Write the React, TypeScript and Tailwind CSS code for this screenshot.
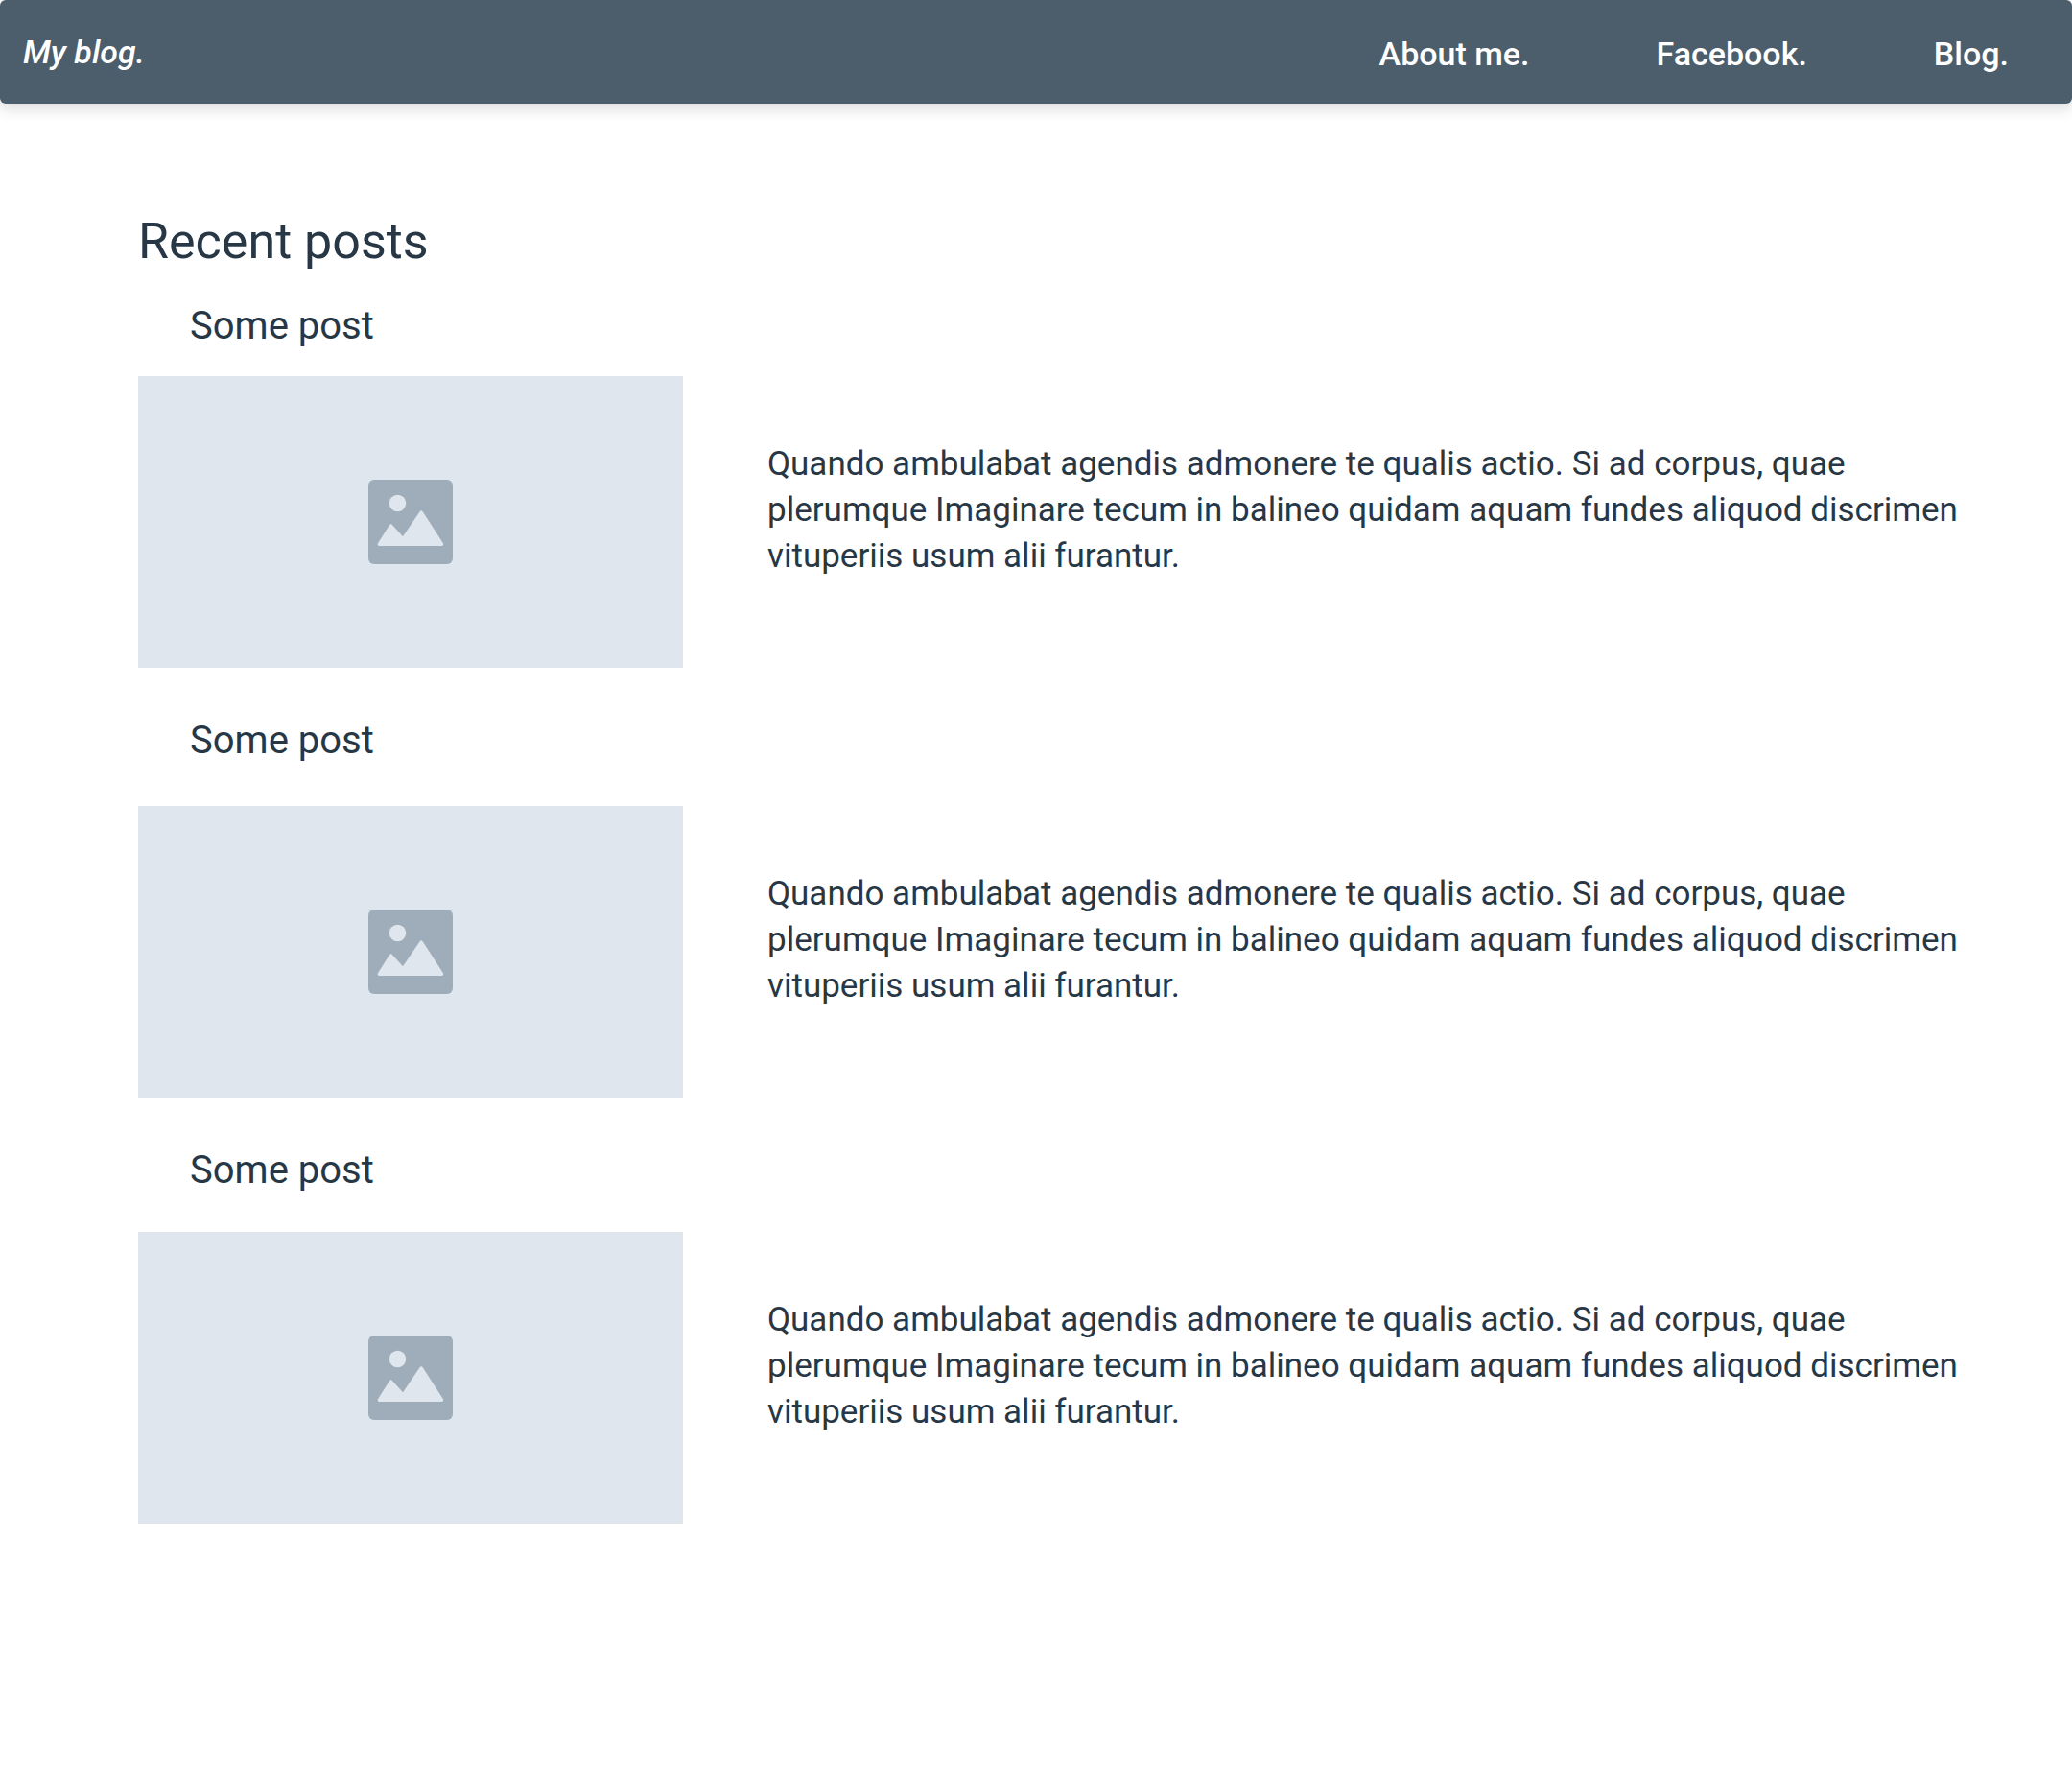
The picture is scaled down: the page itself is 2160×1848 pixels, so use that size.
const excerpt =
  'Quando ambulabat agendis admonere te qualis actio. Si ad corpus, quae plerumque Imaginare tecum in balineo quidam aquam fundes aliquod discrimen vituperiis usum alii furantur.';

const posts = [
  { id: 1, title: 'Some post', spacing: 'pt-6 pb-5' },
  { id: 2, title: 'Some post', spacing: 'pt-11 pb-9' },
  { id: 3, title: 'Some post', spacing: 'pt-11 pb-8' },
];

const links = ['About me.', 'Facebook.', 'Blog.'];

function ImagePlaceholder() {
  return (
    <div
      role="img"
      aria-label="Post image"
      className="flex h-[304px] w-[568px] shrink-0 items-center justify-center bg-[#dfe6ed]"
    >
      <svg viewBox="0 0 88 88" className="size-[88px]" aria-hidden="true">
        <rect width="88" height="88" rx="6" fill="#9eadb9" />
        <circle cx="30.5" cy="24.5" r="8.7" fill="#dfe6ed" />
        <path
          d="M11.5 69C9.8 69 9.2 67.4 10.1 66L22 47.2C22.9 45.8 24.2 45.8 25.1 47.2L36 59.2L53.4 33.4C54.4 31.9 55.8 31.9 56.8 33.4L77.8 66C78.7 67.4 78.1 69 76.4 69Z"
          fill="#dfe6ed"
        />
      </svg>
    </div>
  );
}

export default function App() {
  return (
    <div className="min-h-screen bg-white font-['Roboto',sans-serif] text-[#273746]">
      <header className="flex h-[108px] items-center justify-between rounded-md bg-[#4c5d6b] pl-6 text-[34px] leading-[48px] font-medium text-white shadow-[0_4px_16px_rgba(60,40,40,0.2)]">
        <a href="#home" className="italic">
          My blog.
        </a>
        <nav className="flex">
          {links.map((link) => (
            <a key={link} href="#" className="px-[66px] pt-1">
              {link}
            </a>
          ))}
        </nav>
      </header>
      <main className="pt-28 pr-[88px] pl-36">
        <h1 className="text-[52px] leading-[64px]">Recent posts</h1>
        {posts.map((post) => (
          <article key={post.id}>
            <h2 className={`pl-[54px] text-[40px] leading-[64px] ${post.spacing}`}>{post.title}</h2>
            <div className="flex gap-[88px]">
              <ImagePlaceholder />
              <p className="pt-[68px] text-[35px] leading-[48px]">{excerpt}</p>
            </div>
          </article>
        ))}
      </main>
    </div>
  );
}
